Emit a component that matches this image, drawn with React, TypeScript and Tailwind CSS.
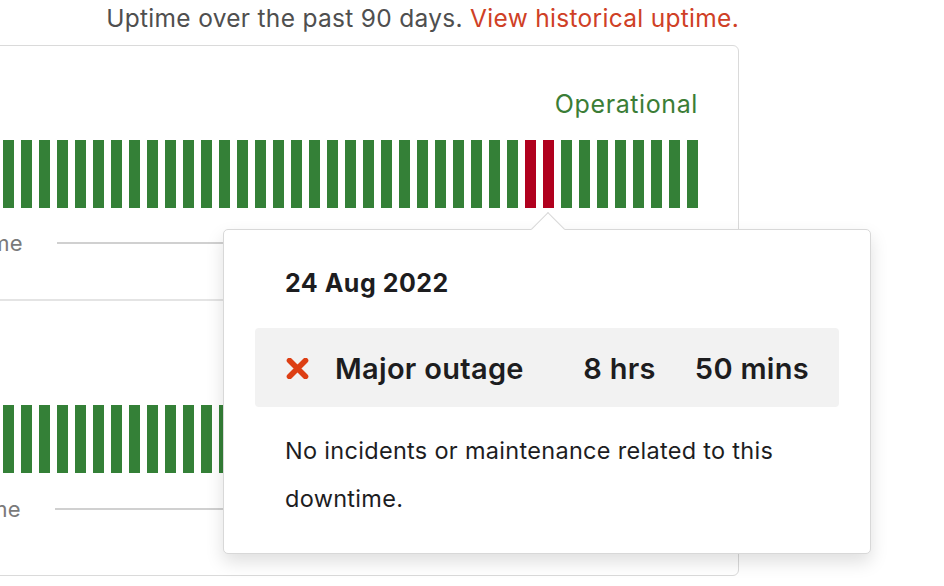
import React from "react";

const bars1 = Array.from({ length: 90 }, (_, i) => i === 80 || i === 81);
const bars2 = Array.from({ length: 90 }, () => false);

function Bars({ data }: { data: boolean[] }) {
  return (
    <div className="mt-[20px] flex h-[68px] justify-end gap-[7px]">
      {data.map((red, i) =>
        red ? (
          <div key={i} className="h-[68px] w-[11px] shrink-0 bg-[#b0001e]" />
        ) : (
          <div key={i} className="h-[68px] w-[11px] shrink-0 bg-[#348037]" />
        )
      )}
    </div>
  );
}

function Legend({ pct, top }: { pct: string; top: string }) {
  return (
    <div className={`${top} flex h-[30px] items-center text-[22px] leading-[30px] tracking-[0.3px] text-[#7a7a7a]`}>
      <span className="shrink-0 pl-[26px]">90 days ago</span>
      <div className="mx-[34px] h-[2px] flex-1 bg-[#d0d0d0]" />
      <span className="shrink-0">{pct} % uptime</span>
      <div className="mx-[34px] h-[2px] flex-1 bg-[#d0d0d0]" />
      <span className="shrink-0">Today</span>
    </div>
  );
}

function XIcon() {
  return (
    <svg width="23" height="21" viewBox="0 0 23 21" className="shrink-0">
      <path
        d="M3.5 2.5 L19.5 18.5 M19.5 2.5 L3.5 18.5"
        stroke="#dd3f14"
        strokeWidth="5.6"
        strokeLinecap="round"
        fill="none"
      />
    </svg>
  );
}

export default function App() {
  return (
    <div className="relative h-[586px] w-[944px] overflow-hidden bg-white font-[Inter,sans-serif]">
      <div className="ml-[-955px] w-[1694px] pt-[2px]">
        <div className="text-right text-[24.5px] leading-[32px] tracking-[0.3px] text-[#4f4f4f]">
          Uptime over the past 90 days.{" "}
          <span className="text-[#cf4026]">View historical uptime.</span>
        </div>
        <div className="mt-[11px] rounded-[6px] border border-[#dadada]">
          <div className="border-b-2 border-[#e4e4e4] px-[40px] pb-[41px] pt-[42px]">
            <div className="flex h-[32px] items-center justify-between text-[25px] leading-[32px] tracking-[0.6px]">
              <span className="text-[#333]">API</span>
              <span className="text-[#3b7d36]">Operational</span>
            </div>
            <Bars data={bars1} />
            <Legend pct="99.59" top="mt-[20px]" />
          </div>
          <div className="px-[40px] pb-[51px] pt-[52px]">
            <div className="flex h-[32px] items-center justify-between text-[25px] leading-[32px] tracking-[0.6px]">
              <span className="text-[#333]">Dashboard</span>
              <span className="text-[#3b7d36]">Operational</span>
            </div>
            <Bars data={bars2} />
            <Legend pct="100.0" top="mt-[21px]" />
          </div>
        </div>
      </div>

      <div className="absolute left-[223px] top-[229px] h-[325px] w-[648px] rounded-[5px] border border-[#d8d8d8] bg-white shadow-[0_8px_18px_rgba(0,0,0,0.13)]">
        <div className="absolute left-[312px] top-[-13px] h-[24px] w-[24px] rotate-45 border-l border-t border-[#d8d8d8] bg-white" />
        <div className="relative px-[31px] pt-[37px] text-[#1d1d1f]">
          <div className="pl-[30px] text-[25px] font-bold leading-[32px] tracking-[0.5px]">24 Aug 2022</div>
          <div className="mt-[29px] flex h-[79px] items-center rounded-[4px] bg-[#f2f2f2] pl-[31px] pr-[30px] pt-[2px] text-[29px] font-semibold leading-[34px] tracking-[0.3px]">
            <XIcon />
            <span className="ml-[26px]">Major outage</span>
            <span className="flex-1" />
            <span>8 hrs</span>
            <span className="ml-[39px]">50 mins</span>
          </div>
          <div className="mt-[20px] pl-[30px] pr-[20px] text-[23.5px] leading-[48px] tracking-[0.3px]">
            No incidents or maintenance related to this downtime.
          </div>
        </div>
      </div>
    </div>
  );
}
